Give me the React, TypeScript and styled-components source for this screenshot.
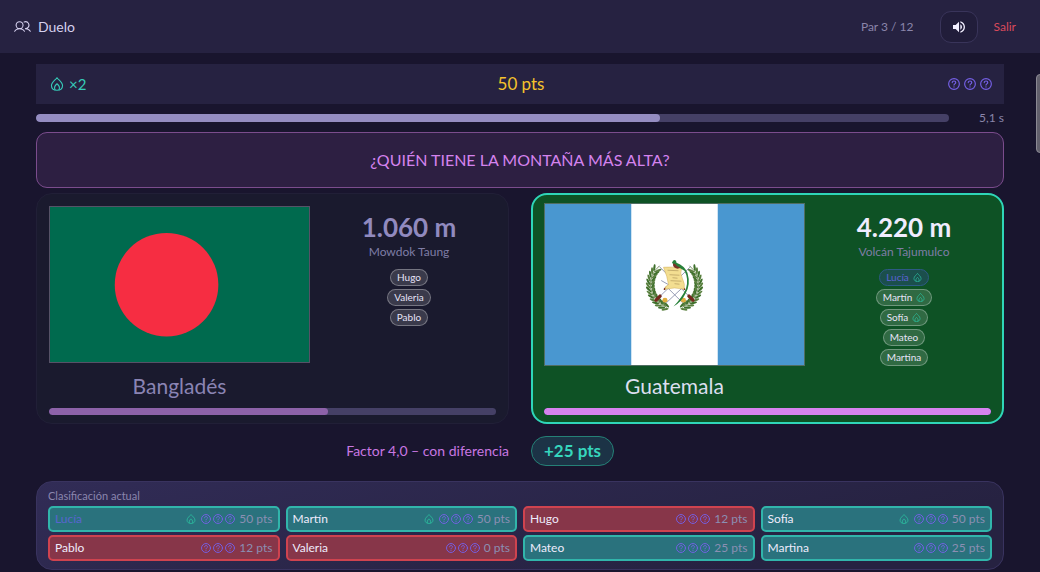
import React from "react";
import styled, { createGlobalStyle, css } from "styled-components";
import { PiUsers } from "react-icons/pi";
import { MdVolumeUp } from "react-icons/md";

const GlobalStyle = createGlobalStyle`
  *, *::before, *::after { box-sizing: border-box; }
  body {
    margin: 0;
    min-height: 100vh;
    background: #19152e;
    color: #e4e0fa;
    font-family: Lato, "Noto Sans", sans-serif;
    font-size: 14px;
  }
  h1, h2, p, ul, ol { margin: 0; padding: 0; font-weight: 400; }
  ul, ol { list-style: none; }
`;

const Header = styled.header`
  display: flex;
  align-items: center;
  gap: 16px;
  height: 53px;
  padding: 0 14px;
  background: #262241;
`;

const Title = styled.h1`
  display: flex;
  align-items: center;
  gap: 7px;
  margin-right: auto;
  font-size: 14px;
  line-height: 20px;
  color: #d5d0ee;
`;

const PairCount = styled.span`
  margin-right: 10px;
  font-size: 12px;
  line-height: 20px;
  color: #8a85aa;
`;

const SoundButton = styled.button`
  display: flex;
  align-items: center;
  justify-content: center;
  width: 38px;
  height: 32px;
  padding: 0;
  border: 1px solid #39345a;
  border-radius: 11px;
  background: #211d3a;
  color: #f2efff;
`;

const ExitButton = styled.button`
  padding: 0 10px 0 0;
  border: 0;
  background: none;
  font: inherit;
  font-size: 12px;
  line-height: 20px;
  color: #d94a5c;
`;

const Main = styled.main`
  display: flex;
  flex-direction: column;
  padding: 11px 36px 0;
`;

const StatusBar = styled.section`
  display: grid;
  grid-template-columns: 1fr auto 1fr;
  align-items: center;
  height: 40px;
  padding: 0 12px 0 14px;
  background: #262241;
`;

const Streak = styled.span`
  display: flex;
  align-items: center;
  gap: 5px;
  font-size: 15px;
  line-height: 20px;
  color: #36cbb8;
`;

const Score = styled.strong`
  font-size: 17px;
  font-weight: 400;
  line-height: 24px;
  color: #f5c22c;
`;

const HelpGroup = styled.span<{ $gap: number; $end?: boolean }>`
  display: flex;
  align-items: center;
  gap: ${(p) => p.$gap}px;
  color: #7560e6;
  ${(p) => p.$end && css`justify-self: end;`}
`;

const Timer = styled.section`
  display: flex;
  align-items: center;
  height: 28px;
`;

const Track = styled.div<{ $height: number }>`
  flex: 1 0 auto;
  height: ${(p) => p.$height}px;
  border-radius: 4px;
  background: #454066;
  overflow: hidden;
`;

const Fill = styled.div<{ $color: string }>`
  height: 100%;
  border-radius: 4px;
  background: ${(p) => p.$color};
`;

const TimeLeft = styled.span`
  width: 55px;
  text-align: right;
  font-size: 12px;
  line-height: 16px;
  color: #8a85aa;
`;

const Question = styled.h2`
  display: flex;
  align-items: center;
  justify-content: center;
  height: 56px;
  border: 1px solid #7b4c8d;
  border-radius: 11px;
  background: #2d1f42;
  font-size: 16px;
  line-height: 20px;
  color: #d583ee;
`;

const Duel = styled.section`
  display: grid;
  grid-template-columns: 1fr 1fr;
  gap: 22px;
  margin-top: 5px;
`;

const Card = styled.article<{ $winner?: boolean }>`
  display: flex;
  flex-direction: column;
  padding: 12px 12px 8px;
  border: 1px solid #211f37;
  border-radius: 16px;
  background: #1a1a2e;
  color: #918abf;
  ${(p) =>
    p.$winner &&
    css`
      padding: 11px 11px 7px;
      border: 2px solid #2fd6b8;
      background: #0e5225;
      color: #f0edff;
    `}
`;

const CardBody = styled.div`
  display: grid;
  grid-template-columns: 3fr 2fr;
  column-gap: 12px;
  height: 202px;
`;

const Country = styled.div`
  display: flex;
  flex-direction: column;
  align-items: center;
`;

const FlagBox = styled.div`
  display: flex;
  align-items: center;
  width: 100%;
  height: 157px;
  svg {
    display: block;
    flex: none;
    width: 100%;
    height: auto;
    border: 1px solid rgba(145, 138, 160, 0.5);
  }
`;

const CountryName = styled.h2<{ $bright?: boolean }>`
  margin-top: 9px;
  font-size: 21px;
  line-height: 28px;
  color: ${(p) => (p.$bright ? "#dcdff0" : "#8a84b4")};
`;

const Facts = styled.div`
  display: flex;
  flex-direction: column;
  align-items: center;
  padding-top: 5px;
`;

const Value = styled.strong`
  font-size: 26px;
  line-height: 32px;
`;

const Place = styled.span`
  font-size: 12px;
  line-height: 18px;
  color: #7f7da6;
`;

const Voters = styled.ul`
  display: flex;
  flex-direction: column;
  align-items: center;
  gap: 3px;
  margin-top: 8px;
`;

const Voter = styled.li<{ $me?: boolean }>`
  display: flex;
  align-items: center;
  gap: 4px;
  padding: 0 6px;
  border: 1px solid rgba(255, 255, 255, 0.3);
  border-radius: 9px;
  background: rgba(255, 255, 255, 0.14);
  font-size: 10px;
  line-height: 15px;
  color: #e6e3f8;
  svg { color: #2cbfa0; }
  ${(p) =>
    p.$me &&
    css`
      border-color: #2d5a85;
      background: #1b4f4c;
      color: #5e62d4;
    `}
`;

const Verdict = styled.section`
  display: grid;
  grid-template-columns: 1fr 1fr;
  align-items: center;
  gap: 22px;
  padding: 12px 0 15px;
`;

const Factor = styled.p`
  text-align: right;
  font-size: 14px;
  line-height: 20px;
  color: #c877e2;
`;

const Bonus = styled.strong`
  justify-self: start;
  padding: 0 12px;
  border: 1px solid #258177;
  border-radius: 15px;
  background: #1c3346;
  font-size: 17px;
  line-height: 28px;
  color: #36d6bd;
`;

const Ranking = styled.section`
  padding: 6px 11px 8px;
  border: 1px solid #39335f;
  border-radius: 16px;
  background: linear-gradient(165deg, #312c56, #262241 80%);
`;

const RankingTitle = styled.h2`
  font-size: 11px;
  line-height: 16px;
  color: #8b86ae;
`;

const RankingGrid = styled.ol`
  display: grid;
  grid-template-columns: repeat(4, 1fr);
  gap: 3px 6px;
  margin-top: 2px;
`;

const Player = styled.li<{ $hit: boolean; $me?: boolean }>`
  display: flex;
  align-items: center;
  height: 26px;
  padding: 0 5px;
  border: 2px solid ${(p) => (p.$hit ? "#31b5ab" : "#cf434f")};
  border-radius: 5px;
  background: ${(p) => (p.$hit ? "#2a727d" : "#873649")};
  font-size: 12px;
  line-height: 20px;
  color: ${(p) => (p.$me ? "#5965cf" : "#eeebfc")};
`;

const PlayerScore = styled.span`
  display: flex;
  align-items: center;
  gap: 4px;
  margin-left: auto;
  color: #8b8fb3;
`;

const FlameWrap = styled.span`
  display: flex;
  margin-right: 1px;
  color: #2cbfa0;
`;

const ScrollThumb = styled.div`
  position: fixed;
  top: 74px;
  right: -4px;
  width: 8px;
  height: 79px;
  border: 1px solid #8b8994;
  border-radius: 4px;
  background: #62606c;
`;

function Flame({ size }: { size: number }) {
  return (
    <svg width={size} height={size} viewBox="0 0 24 24" fill="none" stroke="currentColor" strokeWidth="1.9" strokeLinejoin="round" aria-hidden="true">
      <path d="M12 1.2C9.500 5 2.500 9 2.500 14.700C2.500 19.700 6.500 22.800 12 22.800S21.500 19.700 21.500 14.700C21.500 9 14.500 5 12 1.200Z" />
      <path d="M9 22.300C6.600 18.800 8 15 12 11.600C16 15 17.400 18.800 15 22.300" />
    </svg>
  );
}

function Help({ size }: { size: number }) {
  return (
    <svg width={size} height={size} viewBox="0 0 24 24" fill="none" stroke="currentColor" strokeWidth="2.3" strokeLinecap="round" aria-hidden="true">
      <circle cx="12" cy="12" r="10.700" />
      <path d="M8.500 9.200C8.500 4.800 15.500 5 15.500 9.200C15.500 11.800 12 11.600 12 14.200" />
      <path d="M12 17.800v.1" strokeWidth="2.6" />
    </svg>
  );
}

function Helps({ size, gap, end }: { size: number; gap: number; end?: boolean }) {
  return (
    <HelpGroup $gap={gap} $end={end}>
      {[0, 1, 2].map((i) => (
        <Help key={i} size={size} />
      ))}
    </HelpGroup>
  );
}

function BangladeshFlag() {
  return (
    <svg viewBox="0 0 260 156" role="img" aria-label="Bandera de Bangladés">
      <rect width="260" height="156" fill="#006a4e" />
      <circle cx="117" cy="78" r="52" fill="#f62d42" />
    </svg>
  );
}

/* Laurel branch: pairs of leaves spread along an arc, mirrored for the other side. */
function Branch() {
  const leaves = Array.from({ length: 14 }, (_, i) => {
    const deg = 108 + i * 8.4;
    const a = (deg * Math.PI) / 180;
    return { x: 24 * Math.cos(a), y: 24 * Math.sin(a), deg };
  });
  return (
    <g>
      <path d="M-7.4 22.8A24 24 0 0 1 -15 -19" fill="none" stroke="#5d7a3a" strokeWidth=".8" />
      {leaves.map((l, i) => (
        <g key={i} transform={`translate(${l.x} ${l.y}) rotate(${l.deg + 90})`}>
          <ellipse cx="2.4" cy="-1.4" rx="3.6" ry="1.1" transform="rotate(-30)" fill={i % 2 ? "#3f702c" : "#587f3d"} />
          <ellipse cx="2.4" cy="1.4" rx="3.6" ry="1.1" transform="rotate(30)" fill={i % 2 ? "#5c8042" : "#3f702c"} />
        </g>
      ))}
    </g>
  );
}

function GuatemalaFlag() {
  return (
    <svg viewBox="0 0 260 162" role="img" aria-label="Bandera de Guatemala">
      <rect width="260" height="162" fill="#4997d0" />
      <rect x="86.6" width="86.8" height="162" fill="#fff" />
      <g transform="translate(130 81)">
        <Branch />
        <g transform="scale(-1 1)">
          <Branch />
        </g>
        <g stroke="#8b90ab" strokeWidth=".9" strokeLinecap="round">
          <path d="M-15 -18L17 14M16 -18L-17 14M-13 -4L-6 0M-8 18L9 2M8 18L-8 2" />
        </g>
        <g stroke="#75281d" strokeWidth="3.4" strokeLinecap="round">
          <path d="M-18.5 15.5L-14.500 11.500M18.5 15.5L14.500 11.500" />
        </g>
        <g stroke="#75281d" strokeWidth="1.8" strokeLinecap="round">
          <path d="M-10 4.5L-8.5 3M10 4.5L8.5 3" />
        </g>
        <g fill="#e1ae3f">
          <circle cx="-9.5" cy="15.5" r="2.5" />
          <circle cx="9" cy="15.5" r="2.5" />
        </g>
        <path d="M-11 -17.5Q-2 -18.5 7 -16Q5 -12 8 -6Q11 0 9.500 4.500Q0 2 -9 4.500Q-10.500 2 -6 0Q-7 -8 -11 -17.500Z" fill="#f3de91" stroke="#d6b660" strokeWidth=".6" />
        <path d="M-7 -14.500L4 -14M-5 -10L5 -9.500M-2 -7L3 -6.500M-4 -4L7 -3.500M0 -1L5 -.5" stroke="#a78e55" strokeWidth=".6" />
        <path d="M-2.500 -22Q-1 -26.500 1.500 -24L2 -22Q10 -19 13 -12Q16.500 0 11 9Q7 17 -1 22Q8 12 11.500 4Q14.500 -6 10 -14Q6 -17 1 -18Z" fill="#278039" />
        <path d="M-1.500 -21Q-2 -17 3 -16L6 -17Q2 -18 .5 -21Z" fill="#7b3326" />
      </g>
    </svg>
  );
}

type Vote = { name: string; streak?: boolean; me?: boolean };

const leftVotes: Vote[] = [{ name: "Hugo" }, { name: "Valeria" }, { name: "Pablo" }];
const rightVotes: Vote[] = [
  { name: "Lucía", streak: true, me: true },
  { name: "Martín", streak: true },
  { name: "Sofía", streak: true },
  { name: "Mateo" },
  { name: "Martina" },
];

const players = [
  { name: "Lucía", points: 50, hit: true, streak: true, me: true },
  { name: "Martín", points: 50, hit: true, streak: true },
  { name: "Hugo", points: 12, hit: false },
  { name: "Sofía", points: 50, hit: true, streak: true },
  { name: "Pablo", points: 12, hit: false },
  { name: "Valeria", points: 0, hit: false },
  { name: "Mateo", points: 25, hit: true },
  { name: "Martina", points: 25, hit: true },
];

type CountryCardProps = {
  name: string;
  value: string;
  place: string;
  votes: Vote[];
  share: number;
  barColor: string;
  winner?: boolean;
  flag: React.ReactNode;
};

function CountryCard({ name, value, place, votes, share, barColor, winner, flag }: CountryCardProps) {
  return (
    <Card $winner={winner}>
      <CardBody>
        <Country>
          <FlagBox>{flag}</FlagBox>
          <CountryName $bright={winner}>{name}</CountryName>
        </Country>
        <Facts>
          <Value>{value}</Value>
          <Place>{place}</Place>
          <Voters>
            {votes.map((v) => (
              <Voter key={v.name} $me={v.me}>
                {v.name}
                {v.streak && <Flame size={9} />}
              </Voter>
            ))}
          </Voters>
        </Facts>
      </CardBody>
      <Track $height={7}>
        <Fill $color={barColor} style={{ width: `${share}%` }} />
      </Track>
    </Card>
  );
}

export default function App() {
  return (
    <>
      <GlobalStyle />
      <Header>
        <Title>
          <PiUsers size={17} />
          Duelo
        </Title>
        <PairCount>Par 3 / 12</PairCount>
        <SoundButton type="button" aria-label="Sonido">
          <MdVolumeUp size={16} />
        </SoundButton>
        <ExitButton type="button">Salir</ExitButton>
      </Header>
      <Main>
        <StatusBar>
          <Streak>
            <Flame size={14} />
            ×2
          </Streak>
          <Score>50 pts</Score>
          <Helps size={12} gap={4} end />
        </StatusBar>
        <Timer>
          <Track $height={8}>
            <Fill $color="#958dc2" style={{ width: "68.4%" }} />
          </Track>
          <TimeLeft>5,1 s</TimeLeft>
        </Timer>
        <Question>¿QUIÉN TIENE LA MONTAÑA MÁS ALTA?</Question>
        <Duel>
          <CountryCard name="Bangladés" value="1.060 m" place="Mowdok Taung" votes={leftVotes} share={62.5} barColor="#8d62a9" flag={<BangladeshFlag />} />
          <CountryCard name="Guatemala" value="4.220 m" place="Volcán Tajumulco" votes={rightVotes} share={100} barColor="#d583ee" winner flag={<GuatemalaFlag />} />
        </Duel>
        <Verdict>
          <Factor>Factor 4,0 – con diferencia</Factor>
          <Bonus>+25 pts</Bonus>
        </Verdict>
        <Ranking>
          <RankingTitle>Clasificación actual</RankingTitle>
          <RankingGrid>
            {players.map((p) => (
              <Player key={p.name} $hit={p.hit} $me={p.me}>
                {p.name}
                <PlayerScore>
                  {p.streak && (
                    <FlameWrap>
                      <Flame size={10} />
                    </FlameWrap>
                  )}
                  <Helps size={10} gap={2} />
                  <span>{p.points} pts</span>
                </PlayerScore>
              </Player>
            ))}
          </RankingGrid>
        </Ranking>
      </Main>
      <ScrollThumb />
    </>
  );
}
